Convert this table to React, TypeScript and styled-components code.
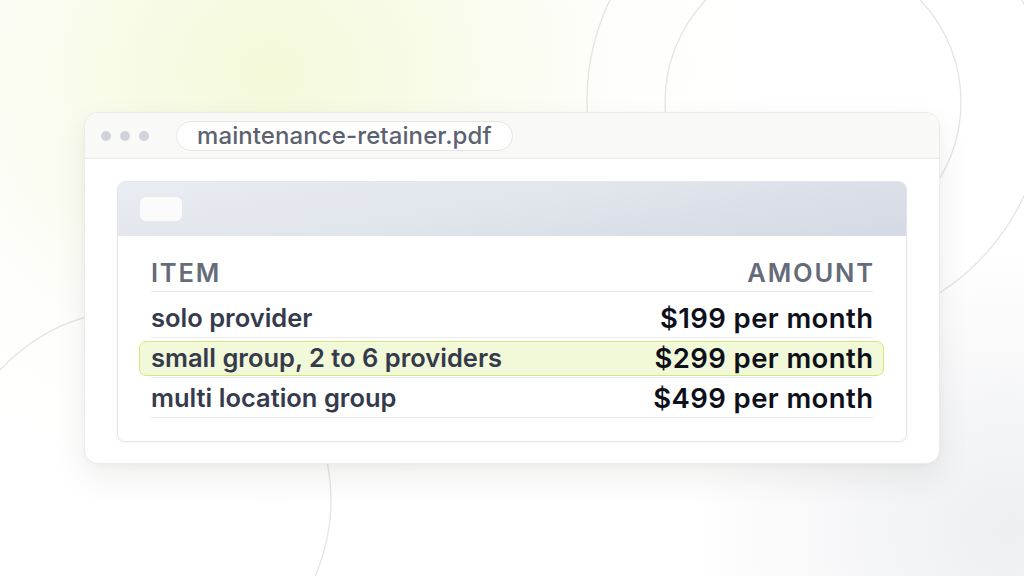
import React from "react";
import styled, { createGlobalStyle } from "styled-components";

const Global = createGlobalStyle`
  html, body { margin: 0; padding: 0; }
  body { font-family: Inter, "Noto Sans", "Liberation Sans", sans-serif; }
  * { box-sizing: border-box; }
`;

const Stage = styled.div`
  position: relative;
  width: 1024px;
  height: 576px;
  overflow: hidden;
  padding: 112px 84px 0 84px;
  background:
    radial-gradient(ellipse 500px 440px at 270px 70px, rgba(241, 248, 208, 0.8) 0%, rgba(245, 250, 224, 0.6) 40%, rgba(252, 253, 245, 0.35) 70%, rgba(255, 255, 255, 0) 100%),
    radial-gradient(ellipse 320px 280px at 1010px 530px, rgba(236, 237, 240, 0.9), rgba(255, 255, 255, 0) 100%),
    #ffffff;
`;

const Rings = styled.svg`
  position: absolute;
  left: 0;
  top: 0;
  pointer-events: none;
`;

const Window = styled.div`
  position: relative;
  width: 856px;
  height: 352px;
  display: flex;
  flex-direction: column;
  background: #ffffff;
  border: 1px solid #ebebe8;
  border-radius: 14px;
  overflow: hidden;
  box-shadow: 0 14px 34px rgba(30, 30, 20, 0.07), 0 2px 6px rgba(30, 30, 20, 0.03);
`;

const TitleBar = styled.div`
  height: 46px;
  flex: none;
  display: flex;
  align-items: center;
  padding-left: 16px;
  background: #f9f9f7;
  border-bottom: 1px solid #ebebe7;
`;

const Dots = styled.div`
  display: flex;
  gap: 9px;
  margin-right: 27px;
`;

const Dot = styled.span`
  width: 10px;
  height: 10px;
  border-radius: 50%;
  background: #d1d3da;
`;

const Pill = styled.div`
  height: 30px;
  display: flex;
  align-items: center;
  padding: 0 20px 0 20px;
  background: #ffffff;
  border: 1px solid #e4e4e1;
  border-radius: 15px;
  font-size: 24px;
  font-weight: 500;
  color: #5c6270;
  letter-spacing: 0.1px;
`;

const Body = styled.div`
  flex: 1;
  padding: 22px 32px 21px 32px;
  display: flex;
`;

const Card = styled.div`
  flex: 1;
  display: flex;
  flex-direction: column;
  border: 1px solid #e5e6ea;
  border-radius: 8px;
  background: #ffffff;
  box-shadow: 0 1px 3px rgba(20, 30, 50, 0.04);
  overflow: hidden;
`;

const CardHeader = styled.div`
  height: 54px;
  flex: none;
  display: flex;
  align-items: center;
  padding-left: 22px;
  background: linear-gradient(170deg, #e9ecf2 0%, #e0e4eb 50%, #d4d9e3 100%);
`;

const Chip = styled.div`
  width: 42px;
  height: 24px;
  border-radius: 6px;
  background: #fbfbfc;
`;

const Table = styled.div`
  display: flex;
  flex-direction: column;
  padding: 0 33px 0 33px;
`;

const HeadRow = styled.div`
  height: 56px;
  display: flex;
  align-items: flex-end;
  justify-content: space-between;
  padding-bottom: 5px;
  border-bottom: 1.5px solid #e8e9ec;
  margin-bottom: 6px;
`;

const HeadCell = styled.span`
  font-size: 25.5px;
  font-weight: 600;
  letter-spacing: 1.8px;
  color: #656b79;
  line-height: 26px;
  &:last-child {
    margin-right: -1.8px;
  }
`;

const Row = styled.div<{ $highlight?: boolean }>`
  position: relative;
  height: 40px;
  display: flex;
  align-items: center;
  justify-content: space-between;
  border-bottom: 1.5px solid #e8e9ec;
  &::before {
    content: "";
    display: ${(p) => (p.$highlight ? "block" : "none")};
    position: absolute;
    top: 3px;
    bottom: 1px;
    left: -12px;
    right: -11px;
    background: #f2f9d8;
    border: 1.5px solid #d2ea7c;
    border-radius: 7px;
  }
`;

const ItemCell = styled.span`
  position: relative;
  font-size: 25.5px;
  font-weight: 600;
  color: #353b4c;
  letter-spacing: 0px;
`;

const AmountCell = styled.span`
  position: relative;
  font-size: 27.5px;
  font-weight: 600;
  color: #0d101a;
  letter-spacing: 0.4px;
  margin-right: -0.4px;
`;

const rows = [
  { item: "solo provider", amount: "$199 per month" },
  { item: "small group, 2 to 6 providers", amount: "$299 per month", highlight: true },
  { item: "multi location group", amount: "$499 per month" },
];

export default function App() {
  return (
    <>
      <Global />
      <Stage>
        <Rings width="1024" height="576" viewBox="0 0 1024 576">
          <g fill="none" stroke="#e4e4e2" strokeWidth="1.3">
            <circle cx="816" cy="100" r="229" />
            <circle cx="813" cy="102" r="148" />
            <circle cx="140" cy="500" r="191" />
          </g>
        </Rings>
        <Window>
          <TitleBar>
            <Dots>
              <Dot />
              <Dot />
              <Dot />
            </Dots>
            <Pill>maintenance-retainer.pdf</Pill>
          </TitleBar>
          <Body>
            <Card>
              <CardHeader>
                <Chip />
              </CardHeader>
              <Table>
                <HeadRow>
                  <HeadCell>ITEM</HeadCell>
                  <HeadCell>AMOUNT</HeadCell>
                </HeadRow>
                {rows.map((r) => (
                  <Row key={r.item} $highlight={r.highlight}>
                    <ItemCell>{r.item}</ItemCell>
                    <AmountCell>{r.amount}</AmountCell>
                  </Row>
                ))}
              </Table>
            </Card>
          </Body>
        </Window>
      </Stage>
    </>
  );
}
